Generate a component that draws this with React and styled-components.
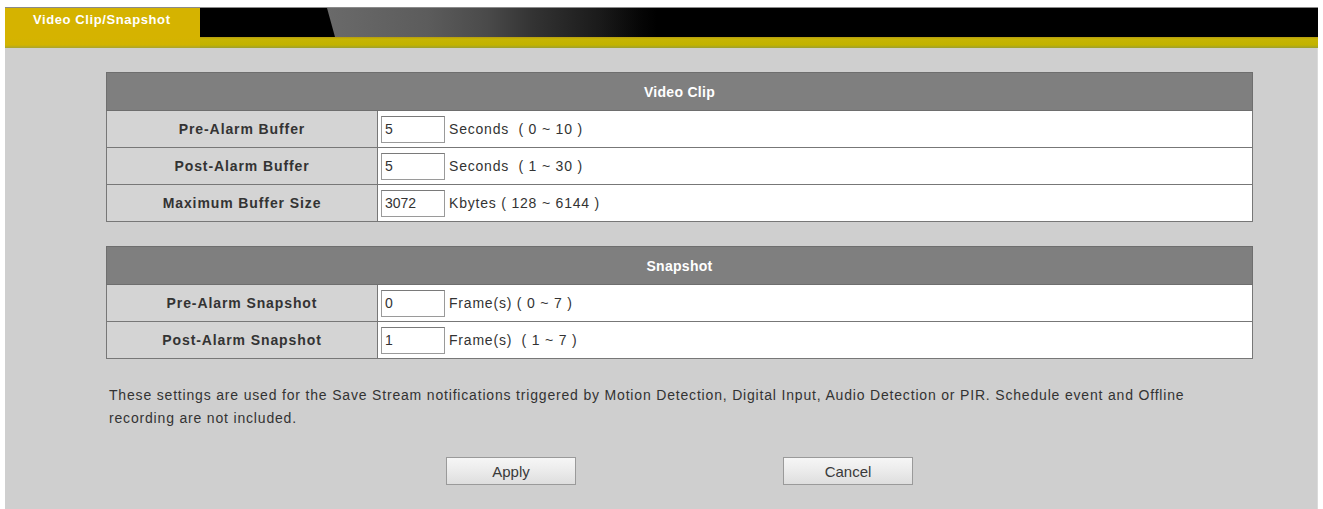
import React from "react";
import styled, { createGlobalStyle } from "styled-components";

const GlobalStyle = createGlobalStyle`
    html, body {
        margin: 0;
        padding: 0;
        background: #fff;
        font-family: "Liberation Sans", Arial, sans-serif;
        overflow: hidden;
    }
`;

const Page = styled.div`
    padding: 7px 5px 0 5px;
    height: 502px;
    display: flex;
    flex-direction: column;
`;

const TabBar = styled.div`
    display: flex;
    height: 30px;
    background: #000;
    border-top: 1px solid #8a8a8a;
    box-sizing: border-box;
`;

const Tab = styled.div`
    width: 195px;
    background: #d5b300;
    color: #fff;
    font-size: 13px;
    font-weight: bold;
    letter-spacing: 0.6px;
    padding: 4px 0 0 28px;
    box-sizing: border-box;
`;

const Gap = styled.div`
    width: 127px;
    background: #000;
`;

const Sweep = styled.div`
    flex: 1;
    background: linear-gradient(90deg, #6a6a6a 0, #5c5c5c 100px, #4a4a4a 160px, #333 206px, #1a1a1a 273px, #050505 315px, #000 330px);
    clip-path: polygon(0 0, 100% 0, 100% 100%, 8px 100%);
`;

const Stripe = styled.div`
    height: 11px;
    background: linear-gradient(180deg, #b59a10 0, #c6b505 2px, #c2b300 8px, #9ca030 11px);
    display: flex;
`;

const StripeTab = styled.div`
    width: 195px;
    background: linear-gradient(180deg, #d5b300 0, #d2b400 8px, #a8a430 11px);
`;

const Content = styled.div`
    flex: 1;
    background: #cfcfcf;
    padding: 24px 0 0 101px;
    border-right: 1px solid #dadada;
`;

const Table = styled.table`
    width: 1147px;
    border-collapse: collapse;
    border: 1px solid #6e6e6e;
    margin-bottom: ${(props) => props.gap || 0}px;
`;

const Head = styled.th`
    height: 37px;
    background: #7f7f7f;
    color: #fff;
    font-size: 14px;
    font-weight: bold;
    letter-spacing: 0.3px;
    text-align: center;
    border-bottom: 1px solid #6e6e6e;
    padding: 0;
`;

const Label = styled.td`
    width: 270px;
    height: 36px;
    background: #d4d4d4;
    color: #333;
    font-size: 14px;
    font-weight: bold;
    letter-spacing: 0.9px;
    text-align: center;
    border: 1px solid #777;
    padding: 0;
`;

const Value = styled.td`
    background: #fff;
    border: 1px solid #777;
    padding: 0 0 0 3px;
`;

const Field = styled.div`
    display: flex;
    align-items: center;
    gap: 4px;
    color: #333;
    font-size: 14px;
    letter-spacing: 0.8px;
`;

const Input = styled.input`
    width: 64px;
    height: 27px;
    box-sizing: border-box;
    border: 1px solid #9a9a9a;
    border-top-color: #7a7a7a;
    padding: 0 3px;
    font-family: "Liberation Sans", Arial, sans-serif;
    font-size: 14px;
    color: #333;
    background: #fff;
    outline: none;
`;

const Note = styled.p`
    width: 1110px;
    margin: 25px 0 0 3px;
    font-size: 14px;
    line-height: 23px;
    letter-spacing: 0.82px;
    color: #333;
`;

const Buttons = styled.div`
    width: 1147px;
    display: flex;
    justify-content: center;
    gap: 207px;
    margin-top: 27px;
`;

const Button = styled.button`
    width: 130px;
    height: 28px;
    border: 1px solid #9a9a9a;
    background: linear-gradient(180deg, #f6f6f6 0, #ebebeb 50%, #dedede 100%);
    font-family: "Liberation Sans", Arial, sans-serif;
    font-size: 15px;
    color: #3a3a3a;
    padding: 0;
`;

const videoClip = [
    { label: "Pre-Alarm Buffer", value: "5", unit: "Seconds\u00a0\u00a0( 0 ~ 10 )" },
    { label: "Post-Alarm Buffer", value: "5", unit: "Seconds\u00a0\u00a0( 1 ~ 30 )" },
    { label: "Maximum Buffer Size", value: "3072", unit: "Kbytes\u00a0( 128 ~ 6144 )" },
];

const snapshot = [
    { label: "Pre-Alarm Snapshot", value: "0", unit: "Frame(s)\u00a0( 0 ~ 7 )" },
    { label: "Post-Alarm Snapshot", value: "1", unit: "Frame(s)\u00a0\u00a0( 1 ~ 7 )" },
];

const Section = ({ title, rows, gap }) => (
    <Table gap={gap}>
        <thead>
            <tr>
                <Head colSpan={2}>{title}</Head>
            </tr>
        </thead>
        <tbody>
            {rows.map((row, i) => (
                <tr key={i}>
                    <Label>{row.label}</Label>
                    <Value>
                        <Field>
                            <Input defaultValue={row.value} />
                            <span>{row.unit}</span>
                        </Field>
                    </Value>
                </tr>
            ))}
        </tbody>
    </Table>
);

const App = () => (
    <>
        <GlobalStyle />
        <Page>
            <TabBar>
                <Tab>Video Clip/Snapshot</Tab>
                <Gap />
                <Sweep />
            </TabBar>
            <Stripe>
                <StripeTab />
            </Stripe>
            <Content>
                <Section title="Video Clip" rows={videoClip} gap={24} />
                <Section title="Snapshot" rows={snapshot} />
                <Note>
                    These settings are used for the Save Stream notifications triggered by Motion Detection, Digital Input, Audio Detection or PIR. Schedule event and Offline recording are not included.
                </Note>
                <Buttons>
                    <Button>Apply</Button>
                    <Button>Cancel</Button>
                </Buttons>
            </Content>
        </Page>
    </>
);

export default App;
